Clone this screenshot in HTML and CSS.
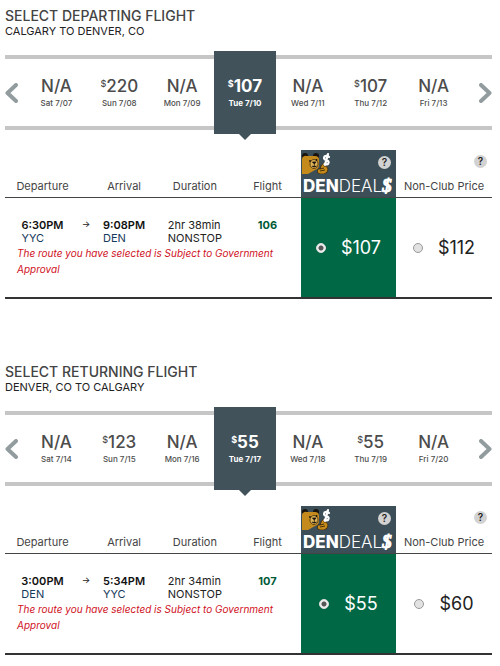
FILE: index.html
```html
<!DOCTYPE html>
<html lang="en">
<head>
<meta charset="utf-8">
<meta name="viewport" content="width=device-width, initial-scale=1">
<title>Select flights</title>
<link rel="stylesheet" href="styles.css">
</head>
<body>
<svg class="defs" aria-hidden="true">
  <symbol id="bear" viewBox="0 0 30 22">
    <circle cx="3" cy="4" r="3" fill="#17130f"/>
    <circle cx="14" cy="4" r="3" fill="#17130f"/>
    <path d="M0 22V7Q0 4 4 4H13Q17 4 17 8V13Q17 17 13 18L6 22Z" fill="#c48a1b"/>
    <circle cx="3.500" cy="5" r="1.300" fill="#c48a1b"/>
    <ellipse cx="12" cy="12" rx="4" ry="4.500" fill="#dfb458" stroke="#2b1d08" stroke-width=".7"/>
    <path d="M10.500 10H14L12.300 12ZM12.300 12V14M10 14Q12 16 14.500 14" fill="#17130f" stroke="#17130f" stroke-width=".8"/>
    <circle cx="8" cy="9" r=".9" fill="#17130f"/>
    <circle cx="14.500" cy="8" r=".9" fill="#17130f"/>
    <path d="M16 17Q14 21 18 22H22Q26 21 26 17Q25 13 22 14L22 11L19.500 13L18 17Z" fill="#c48a1b" stroke="#2b1d08" stroke-width=".7"/>
    <path d="M18 17L22 16M18 19L23 18" stroke="#2b1d08" stroke-width=".8"/>
    <path d="M27 5Q25 3 22.500 4.500Q21 7 24 8Q28 9 26 12Q24 13 22.500 12M26 2L23 13" fill="none" stroke="#fff" stroke-width="2.200" stroke-linecap="round"/>
  </symbol>
</svg>
<main class="page">
  <section class="leg">
    <h2 class="title">SELECT DEPARTING FLIGHT</h2>
    <p class="route">CALGARY TO DENVER, CO</p>
    <nav class="strip" aria-label="Departure dates">
      <button class="step" aria-label="Earlier dates"><svg class="chevron" viewBox="0 0 13 20"><path d="M11 2L2.500 10L11 18"/></svg></button>
      <div class="days">
        <button class="day"><span class="fare">N/A</span><span class="date">Sat 7/07</span></button>
        <button class="day"><span class="fare"><sup>$</sup>220</span><span class="date">Sun 7/08</span></button>
        <button class="day"><span class="fare">N/A</span><span class="date">Mon 7/09</span></button>
        <button class="day selected" aria-current="date"><span class="fare"><sup>$</sup>107</span><span class="date">Tue 7/10</span></button>
        <button class="day"><span class="fare">N/A</span><span class="date">Wed 7/11</span></button>
        <button class="day"><span class="fare"><sup>$</sup>107</span><span class="date">Thu 7/12</span></button>
        <button class="day"><span class="fare">N/A</span><span class="date">Fri 7/13</span></button>
      </div>
      <button class="step next" aria-label="Later dates"><svg class="chevron" viewBox="0 0 13 20"><path d="M2 2L10.500 10L2 18"/></svg></button>
    </nav>
    <table class="flights">
      <colgroup><col class="c-dep"><col class="c-arrow"><col class="c-arr"><col class="c-dur"><col class="c-num"><col class="c-deal"><col class="c-price"></colgroup>
      <thead>
        <tr>
          <th>Departure</th><th></th><th>Arrival</th><th>Duration</th><th>Flight</th>
          <th class="deal-head"><div class="brand-top"><svg class="bear"><use href="#bear"/></svg><button class="help" aria-label="About Den Deals">?</button></div><div class="brand"><b>DEN</b>DEAL<i>$</i></div></th>
          <th class="price-head"><div class="brand-top"><button class="help" aria-label="About non-club price">?</button></div><div class="price-label">Non-Club Price</div></th>
        </tr>
      </thead>
      <tbody>
        <tr>
          <td><div class="stop"><b>6:30PM</b><a href="#">YYC</a></div></td>
          <td class="arrow">→</td>
          <td><div class="stop"><b>9:08PM</b><a href="#">DEN</a></div></td>
          <td><div class="stop">2hr 38min<span>NONSTOP</span></div></td>
          <td><a class="number" href="#">106</a></td>
          <td class="deal" rowspan="2"><label class="choice"><input type="radio" name="out" checked>$107</label></td>
          <td class="regular" rowspan="2"><label class="choice"><input type="radio" name="out">$112</label></td>
        </tr>
        <tr><td class="note" colspan="5">The route you have selected is Subject to Government Approval</td></tr>
      </tbody>
    </table>
  </section>
  <section class="leg">
    <h2 class="title">SELECT RETURNING FLIGHT</h2>
    <p class="route">DENVER, CO TO CALGARY</p>
    <nav class="strip" aria-label="Return dates">
      <button class="step" aria-label="Earlier dates"><svg class="chevron" viewBox="0 0 13 20"><path d="M11 2L2.500 10L11 18"/></svg></button>
      <div class="days">
        <button class="day"><span class="fare">N/A</span><span class="date">Sat 7/14</span></button>
        <button class="day"><span class="fare"><sup>$</sup>123</span><span class="date">Sun 7/15</span></button>
        <button class="day"><span class="fare">N/A</span><span class="date">Mon 7/16</span></button>
        <button class="day selected" aria-current="date"><span class="fare"><sup>$</sup>55</span><span class="date">Tue 7/17</span></button>
        <button class="day"><span class="fare">N/A</span><span class="date">Wed 7/18</span></button>
        <button class="day"><span class="fare"><sup>$</sup>55</span><span class="date">Thu 7/19</span></button>
        <button class="day"><span class="fare">N/A</span><span class="date">Fri 7/20</span></button>
      </div>
      <button class="step next" aria-label="Later dates"><svg class="chevron" viewBox="0 0 13 20"><path d="M2 2L10.500 10L2 18"/></svg></button>
    </nav>
    <table class="flights">
      <colgroup><col class="c-dep"><col class="c-arrow"><col class="c-arr"><col class="c-dur"><col class="c-num"><col class="c-deal"><col class="c-price"></colgroup>
      <thead>
        <tr>
          <th>Departure</th><th></th><th>Arrival</th><th>Duration</th><th>Flight</th>
          <th class="deal-head"><div class="brand-top"><svg class="bear"><use href="#bear"/></svg><button class="help" aria-label="About Den Deals">?</button></div><div class="brand"><b>DEN</b>DEAL<i>$</i></div></th>
          <th class="price-head"><div class="brand-top"><button class="help" aria-label="About non-club price">?</button></div><div class="price-label">Non-Club Price</div></th>
        </tr>
      </thead>
      <tbody>
        <tr>
          <td><div class="stop"><b>3:00PM</b><a href="#">DEN</a></div></td>
          <td class="arrow">→</td>
          <td><div class="stop"><b>5:34PM</b><a href="#">YYC</a></div></td>
          <td><div class="stop">2hr 34min<span>NONSTOP</span></div></td>
          <td><a class="number" href="#">107</a></td>
          <td class="deal" rowspan="2"><label class="choice"><input type="radio" name="back" checked>$55</label></td>
          <td class="regular" rowspan="2"><label class="choice"><input type="radio" name="back">$60</label></td>
        </tr>
        <tr><td class="note" colspan="5">The route you have selected is Subject to Government Approval</td></tr>
      </tbody>
    </table>
  </section>
</main>
</body>
</html>
```
FILE: styles.css
```css
* { box-sizing: border-box; }
body { margin: 0; background: #fff; color: #222; font-family: Inter, "Open Sans", sans-serif; font-size: 11px; line-height: 13px; }
button { margin: 0; padding: 0; border: 0; background: none; font: inherit; color: inherit; cursor: pointer; }
a { color: #153a5b; text-decoration: none; }
.defs { display: none; }
.page { padding: 8px 8px 0 5px; }
.leg { margin-bottom: 65px; }
.leg:last-child { margin-bottom: 0; }
.title { margin: 0; font-size: 14px; line-height: 16px; font-weight: 500; color: #444; }
.route { margin: 0 0 16px; font-size: 11px; line-height: 15px; color: #222; }

.strip { display: flex; height: 75px; border: solid #c6c6c6; border-width: 4px 0; }
.step { display: flex; align-items: center; width: 20px; }
.step.next { width: 27px; justify-content: flex-end; }
.chevron { width: 13px; height: 20px; fill: none; stroke: #929c9f; stroke-width: 4; stroke-linecap: round; stroke-linejoin: round; }
.days { flex: 1; display: grid; grid-template-columns: repeat(7, 1fr); }
.day { display: flex; flex-direction: column; align-items: center; justify-content: center; gap: 2px; color: #4c4c4c; }
.fare { font-size: 17px; line-height: 18px; font-weight: 500; }
.fare sup { font-size: 9px; line-height: 10px; vertical-align: 5px; }
.date { font-size: 8px; line-height: 12px; font-weight: 500; }
.day.selected { position: relative; margin: -8px 0; background: #41525a; color: #fff; }
.selected .fare, .selected .date { font-weight: 700; }
.day.selected::after { content: ""; position: absolute; top: 100%; left: 50%; margin-left: -6px; border: 6px solid transparent; border-top-color: #41525a; border-bottom: 0; }

.flights { width: 100%; margin-top: 20px; table-layout: fixed; border-collapse: collapse; text-align: center; }
.c-dep { width: 15.400%; }
.c-arrow { width: 2.500%; }
.c-arr { width: 13.100%; }
.c-dur { width: 16%; }
.c-num { width: 13.800%; }
.c-deal { width: 19.500%; }
.c-price { width: 19.700%; }
.flights th { height: 47px; padding: 0 0 3px; vertical-align: bottom; font-size: 11px; line-height: 15px; font-weight: 400; color: #444; border-bottom: 1px solid #444; white-space: nowrap; }
.flights th.deal-head { padding: 0; background: #3c4e57; vertical-align: top; }
.flights th.price-head { vertical-align: top; }
.brand-top { display: flex; justify-content: flex-end; height: 25px; padding: 5px 5px 0 0; }
.deal-head .brand-top { justify-content: space-between; padding: 0 5px 0 1px; align-items: center; }
.bear { width: 30px; height: 22px; }
.help { width: 13px; height: 13px; border-radius: 50%; background: #d2d2d2; color: #222; font-size: 10px; line-height: 13px; font-weight: 600; }
.brand { padding-left: 2px; display: flex; align-items: center; color: #fff; font-size: 17px; line-height: 22px; font-weight: 300; }
.brand b { font-weight: 800; }
.brand i { font-family: "Liberation Serif", serif; font-size: 19px; font-weight: 700; -webkit-text-stroke: 1px #fff; }
.price-label { margin-top: 4px; }

.flights td { padding: 0; vertical-align: top; }
.flights tbody tr:first-child td { padding-top: 21px; }
.stop { display: inline-block; vertical-align: top; text-align: left; }
.stop b { display: block; font-weight: 600; color: #111; }
.stop a, .stop span { display: block; }
.arrow { font-size: 9px; line-height: 9px; font-weight: 500; }
.number { font-weight: 700; color: #005a36; }
.flights tbody tr:last-child { border-bottom: 2px solid #333; }
.flights td.note { height: 53px; padding: 0 20px 0 12px; text-align: left; font-size: 10px; line-height: 16px; font-style: italic; color: #d0101c; }
.flights tbody tr:first-child td.deal, .flights tbody tr:first-child td.regular { padding: 0; vertical-align: middle; border-bottom: 2px solid #333; }
.flights td.deal { background: #006845; color: #fff; }
.choice { display: flex; align-items: center; justify-content: center; gap: 15px; font-size: 18px; line-height: 20px; }
.choice input { appearance: none; width: 10px; height: 10px; margin: 0; border: 1px solid #999; border-radius: 50%; background: #e2e2e2; }
.choice input:checked { border-color: #ddd; background: radial-gradient(circle, #555 0 2px, #eee 3px); }
```
